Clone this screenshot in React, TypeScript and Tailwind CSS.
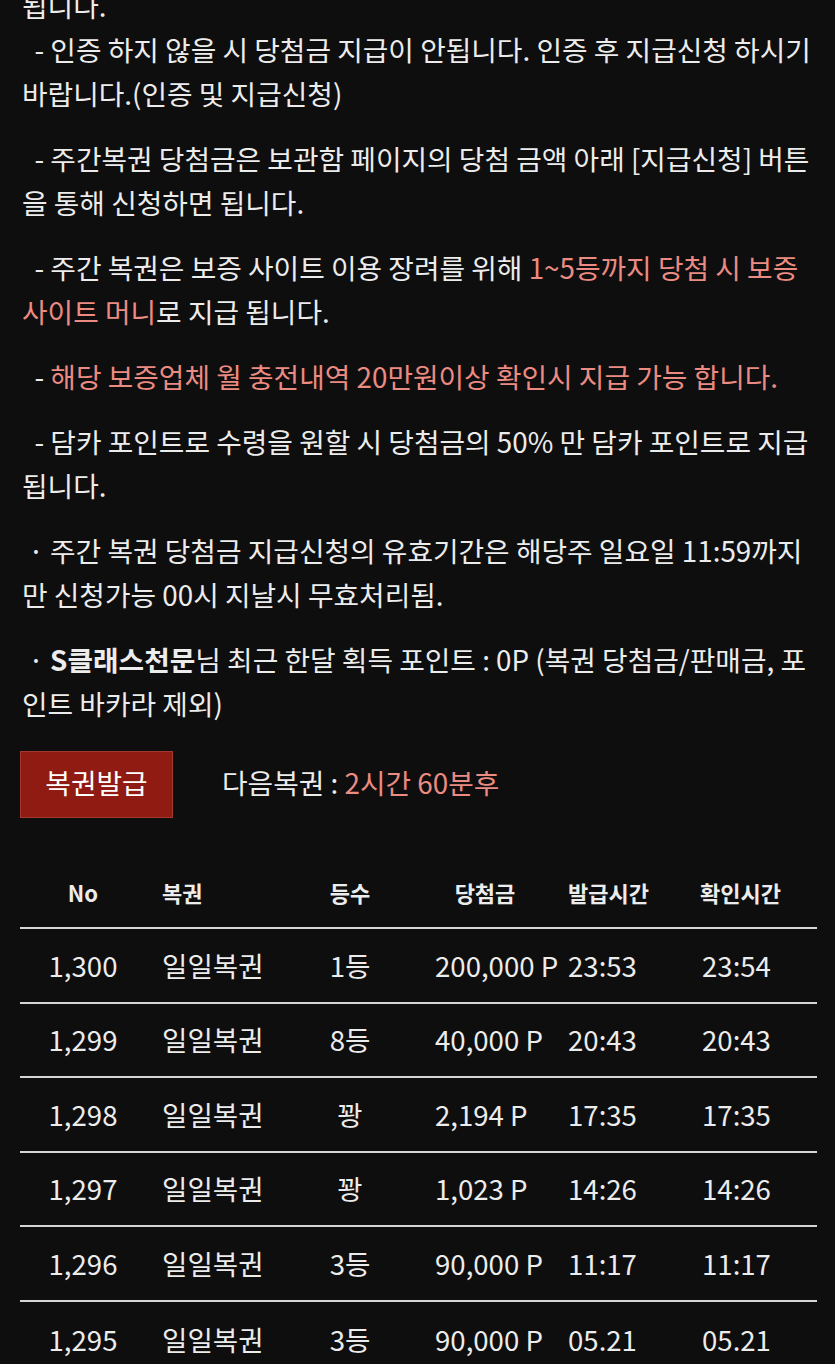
import React from 'react'

const font = { fontFamily: '"Noto Sans CJK KR", "Noto Sans", sans-serif' }

type Row = { no: string; name: string; rank: string; prize: string; issued: string; checked: string }

const rows: Row[] = [
  { no: '1,300', name: '일일복권', rank: '1등', prize: '200,000 P', issued: '23:53', checked: '23:54' },
  { no: '1,299', name: '일일복권', rank: '8등', prize: '40,000 P', issued: '20:43', checked: '20:43' },
  { no: '1,298', name: '일일복권', rank: '꽝', prize: '2,194 P', issued: '17:35', checked: '17:35' },
  { no: '1,297', name: '일일복권', rank: '꽝', prize: '1,023 P', issued: '14:26', checked: '14:26' },
  { no: '1,296', name: '일일복권', rank: '3등', prize: '90,000 P', issued: '11:17', checked: '11:17' },
  { no: '1,295', name: '일일복권', rank: '3등', prize: '90,000 P', issued: '05.21', checked: '05.21' },
]

const cols = 'grid grid-cols-[126px_144px_120px_150px_130px_127px] items-center'

export default function App() {
  return (
    <div className="min-h-screen bg-[#0e0e0e] text-[#ececec] overflow-hidden" style={font}>
      {/* notice text */}
      <div className="px-[22px] -mt-[17px] text-[27.8px] leading-[44px]">
        <p>
          됩니다.<br />
          &nbsp; - 인증 하지 않을 시 당첨금 지급이 안됩니다. 인증 후 지급신청 하시기<br />
          바랍니다.(인증 및 지급신청)
        </p>
        <p className="mt-[21px]">
          &nbsp; - 주간복권 당첨금은 보관함 페이지의 당첨 금액 아래 [지급신청] 버튼<br />
          을 통해 신청하면 됩니다.
        </p>
        <p className="mt-[21px]">
          &nbsp; - 주간 복권은 보증 사이트 이용 장려를 위해 <span className="text-[#eb8b82]">1~5등까지 당첨 시 보증</span><br />
          <span className="text-[#eb8b82]">사이트 머니</span>로 지급 됩니다.
        </p>
        <p className="mt-[21px]">
          &nbsp; - <span className="text-[#eb8b82]">해당 보증업체 월 충전내역 20만원이상 확인시 지급 가능 합니다.</span>
        </p>
        <p className="mt-[21px]">
          &nbsp; - 담카 포인트로 수령을 원할 시 당첨금의 50% 만 담카 포인트로 지급<br />
          됩니다.
        </p>
        <p className="mt-[21px]">
          &nbsp;· 주간 복권 당첨금 지급신청의 유효기간은 해당주 일요일 11:59까지<br />
          만 신청가능 00시 지날시 무효처리됨.
        </p>
        <p className="mt-[21px]">
          &nbsp;· <b className="font-bold">S클래스천문</b>님 최근 한달 획득 포인트 : 0P (복권 당첨금/판매금, 포<br />
          인트 바카라 제외)
        </p>
      </div>

      {/* issue button */}
      <div className="mt-[26px] px-5 flex items-center gap-[49px]">
        <button
          type="button"
          className="w-[153px] h-[67px] pb-[3px] bg-[#8f1b12] border border-[#a3392e] text-white text-[27.8px]"
        >
          복권발급
        </button>
        <div className="text-[27.8px] pb-1">
          다음복권 :&nbsp;<span className="text-[#eb8b82]">2시간 60분후</span>
        </div>
      </div>

      {/* history table */}
      <div className="mt-[40px] mx-5 w-[797px]">
        <div className={`${cols} h-[71px] text-[22px] font-bold border-b-2 border-[#d6d6d6]`}>
          <div className="text-center">No</div>
          <div className="pl-4">복권</div>
          <div className="text-center">등수</div>
          <div className="text-center">당첨금</div>
          <div className="pl-2">발급시간</div>
          <div className="pl-[10px]">확인시간</div>
        </div>
        {rows.map((r, i) => (
          <div
            key={i}
            className={`${cols} h-[74.6px] text-[27.6px] ${i < rows.length - 1 ? 'border-b-2 border-[#d6d6d6]' : ''}`}
          >
            <div className="text-center">{r.no}</div>
            <div className="pl-4">{r.name}</div>
            <div className="text-center">{r.rank}</div>
            <div className="pl-[25px] whitespace-nowrap">{r.prize}</div>
            <div className="pl-2">{r.issued}</div>
            <div className="pl-3">{r.checked}</div>
          </div>
        ))}
      </div>
    </div>
  )
}
